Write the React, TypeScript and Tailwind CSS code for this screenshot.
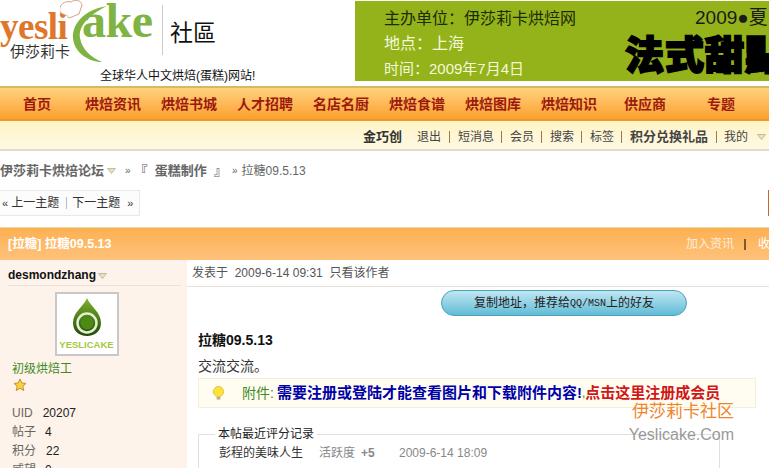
const cjk = "font-['Liberation_Sans','Noto_Sans_CJK_SC',sans-serif]";

const navItems = ["首页", "烘焙资讯", "烘焙书城", "人才招聘", "名店名厨", "烘焙食谱", "烘焙图库", "烘焙知识", "供应商", "专题"];
const links = ["短消息", "会员", "搜索", "标签"];

function Caret({ className = "" }: { className?: string }) {
  return (
    <svg width="9" height="6" viewBox="0 0 9 6" className={className}>
      <path d="M0.5 0.5 L8.5 0.5 L4.5 5.5 Z" fill="#e8dfc4" stroke="#b8b090" strokeWidth="0.8" />
    </svg>
  );
}

function Logo() {
  return (
    <div className="relative w-[162px] h-[66px] shrink-0">
      <span className="absolute left-0 top-[12px] text-[37px] leading-[30px] font-bold text-[#e0762c] font-['Liberation_Serif',serif] tracking-[-0.5px]">yesli</span>
      <span className="absolute left-[10px] top-[43px] text-[15px] leading-[18px] text-[#333]">伊莎莉卡</span>
      <svg width="60" height="66" viewBox="0 0 60 66" className="absolute left-[60px] top-0">
        <path d="M47 6 C22 10 12 26 13 38 C14 52 28 62 42 62 C32 58 22 50 20 38 C18 26 30 14 47 6 Z" fill="#7fb342" />
        <path d="M0 12 C-2 5 5 0 11 2 C15 -1 21 0 22 5 L19 14 L9 18 C8 15 3 15 0 12 Z" fill="#fff" stroke="#d9a184" strokeWidth="1" />
      </svg>
      <span className="absolute left-[82px] top-0 text-[48px] leading-[42px] font-bold text-[#7fb342] font-['Liberation_Serif',serif] tracking-[-0.5px]">ake</span>
    </div>
  );
}

function Banner() {
  return (
    <div className="relative w-[414px] h-[80px] mt-px bg-[#94b31a] overflow-hidden shrink-0">
      <div className="flex flex-col pl-[29px] pt-[5px] text-[16px] leading-[25px] whitespace-nowrap">
        <span className="text-[#1c2a05]">主办单位：伊莎莉卡烘焙网</span>
        <span className="text-[#f4f8dc]">地点：上海</span>
        <span className="text-[15px] text-[#f4f8dc]">时间：2009年7月4日</span>
      </div>
      <span className="absolute left-[340px] top-[5px] text-[19px] leading-[24px] whitespace-nowrap text-[#1a1a1a]">2009●夏</span>
      <span className="absolute left-[270px] top-[32px] text-[39px] leading-[46px] font-black whitespace-nowrap text-black [-webkit-text-stroke:2px_black] tracking-[1px]">法式甜點</span>
    </div>
  );
}

function Avatar() {
  return (
    <div className="w-[64px] h-[64px] border-2 border-[#c8c8c8] bg-white flex flex-col items-center pt-[3px]">
      <svg width="32" height="40" viewBox="0 0 32 40">
        <defs>
          <linearGradient id="drop" x1="0" y1="0" x2="0" y2="1">
            <stop offset="0" stopColor="#7fb32a" />
            <stop offset="1" stopColor="#1f4a0c" />
          </linearGradient>
        </defs>
        <path d="M16 1 C19 9 30 15 30 26 C30 34 24 39 16 39 C8 39 2 34 2 26 C2 15 13 9 16 1 Z" fill="url(#drop)" />
        <circle cx="16" cy="26" r="9.5" fill="none" stroke="#e4efd2" strokeWidth="2.5" />
        <circle cx="16" cy="26" r="6.5" fill="#4c8a14" />
      </svg>
      <span className="text-[9.5px] leading-[11px] font-bold text-[#a3c93f] mt-[2px] font-['Liberation_Sans',sans-serif]">YESLICAKE</span>
    </div>
  );
}

function Stat({ label, value, gap }: { label: string; value: string; gap: string }) {
  return (
    <div className={`flex ${gap} h-[19px] items-center text-[12px]`}>
      <span className="text-[#666]">{label}</span>
      <span className="text-[#222]">{value}</span>
    </div>
  );
}

export default function App() {
  return (
    <div className={`relative w-[769px] h-[468px] overflow-hidden bg-white ${cjk}`}>
      <header className="flex h-[86px]">
        <div className="w-[355px] shrink-0 flex flex-col">
          <div className="flex items-center h-[66px]">
            <Logo />
            <div className="w-px h-[50px] mb-[6px] bg-[#ccc]" />
            <span className="ml-[7px] text-[23px] leading-[28px] text-[#111]">社區</span>
          </div>
          <span className="pl-[100px] mt-[2px] text-[12px] leading-[16px] text-[#111] whitespace-nowrap">全球华人中文烘焙(蛋糕)网站!</span>
        </div>
        <Banner />
      </header>

      <nav className="flex h-[35px] pt-[1px] items-center border-t-2 border-t-[#d8b860] border-b-2 border-b-[#ea9a30] bg-gradient-to-b from-[#ffd27a] to-[#fb9f2c]">
        {navItems.map((n, i) => (
          <span key={n} className={`w-[76px] shrink-0 text-center text-[14px] font-bold text-[#9c1a0c] whitespace-nowrap ${i === 0 ? "-ml-[1px]" : ""}`}>{n}</span>
        ))}
      </nav>

      <div className="flex h-[30px] pt-[3px] items-center justify-end pr-[3px] border-b-2 border-b-[#e2dcc6] bg-gradient-to-b from-[#fff3c4] to-[#fff9e4] text-[12px] text-[#444] whitespace-nowrap">
        <span className="text-[13px] font-bold text-[#333] mr-[15px]">金巧创</span>
        <span className="pr-[8px]">退出</span>
        {links.map((l) => (
          <span key={l} className="flex items-center">
            <span className="w-px h-[12px] bg-[#9c7a50] mr-[8px]" />
            <span className="pr-[7px]">{l}</span>
          </span>
        ))}
        <span className="w-px h-[12px] bg-[#9c7a50] mr-[8px]" />
        <span className="text-[13px] font-bold text-[#444] pr-[8px]">积分兑换礼品</span>
        <span className="w-px h-[12px] bg-[#9c7a50] mr-[7px]" />
        <span>我的</span>
        <Caret className="ml-[9px]" />
      </div>

      <div className="flex items-center h-[39px] text-[12px] text-[#666] whitespace-nowrap">
        <span className="text-[13px] font-bold">伊莎莉卡烘焙论坛</span>
        <Caret className="ml-[3px]" />
        <span className="ml-[9px] text-[10px]">»</span>
        <span className="ml-[4px] text-[13px] font-bold">『&nbsp; 蛋糕制作&nbsp; 』</span>
        <span className="ml-[5px] text-[10px]">»</span>
        <span className="ml-[4px] text-[12px]">拉糖09.5.13</span>
      </div>

      <div className="flex justify-between h-[26px]">
        <div className="flex items-center w-[140px] border border-l-0 border-[#e8e8e8] bg-[#fcfcfc] text-[12px] text-[#333] whitespace-nowrap">
          <span className="text-[11px] ml-[2px]">«</span>
          <span className="ml-[3px]">上一主题</span>
          <span className="mx-[5px] ml-[7px] w-px h-[12px] bg-[#bbb]" />
          <span>下一主题</span>
          <span className="text-[11px] ml-[7px]">»</span>
        </div>
        <div className="w-px bg-[#c8662c]" />
      </div>

      <div className="flex items-center justify-between h-[33px] mt-[11px] pl-[8px] border-t border-t-[#e8d8a8] bg-gradient-to-b from-[#fdb050] to-[#fec27a] text-[12px] text-white whitespace-nowrap">
        <span className="text-[12.5px] font-bold">[拉糖] 拉糖09.5.13</span>
        <span className="flex items-center">
          <span className="text-[#fbeedd]">加入资讯</span>
          <span className="ml-[10px] w-[2px] h-[11px] bg-[#7a5a30]" />
          <span className="ml-[12px] w-[11px] overflow-hidden">收</span>
        </span>
      </div>

      <div className="flex h-[208px]">
        <aside className="w-[187px] shrink-0 bg-[#fdf3ea] pl-[8px] pr-[6px]">
          <div className="flex items-center h-[26px] pt-[4px] border-b border-b-[#ebe2d6] text-[12px] font-bold text-[#111]">
            desmondzhang
            <Caret className="ml-[2px] mt-[2px]" />
          </div>
          <div className="flex justify-center pr-[16px] pt-[6px]">
            <Avatar />
          </div>
          <div className="pl-[4px] mt-[3px] text-[12px] leading-[20px] text-[#3f8a1f]">初级烘焙工</div>
          <svg width="14" height="14" viewBox="0 0 14 14" className="ml-[5px] -mt-[1px]">
            <path d="M7 1 L8.8 5 L13 5.4 L9.8 8.2 L10.8 12.6 L7 10.2 L3.2 12.6 L4.2 8.2 L1 5.4 L5.2 5 Z" fill="#fbd23c" stroke="#c8902c" strokeWidth="1" />
          </svg>
          <div className="pl-[4px] mt-[11px]">
            <Stat label="UID" value="20207" gap="gap-[10px]" />
            <Stat label="帖子" value="4" gap="gap-[9px]" />
            <Stat label="积分" value="22" gap="gap-[10px]" />
            <Stat label="威望" value="0" gap="gap-[9px]" />
          </div>
        </aside>

        <main className="flex-1 min-w-0 pr-[13px]">
          <div className="flex items-center h-[27px] -mr-[13px] border-b border-b-[#e6e2da] text-[12px] text-[#555] whitespace-nowrap pl-[5px]">
            发表于&nbsp; 2009-6-14 09:31&nbsp; 只看该作者
          </div>
          <div className="flex justify-end pr-[69px] pt-[3px]">
            <div className="w-[246px] h-[26px] flex items-center justify-center rounded-full border border-[#4da0b8] bg-gradient-to-b from-[#bfe6f2] to-[#5fbcd6] text-[12px] text-[#222]">
              复制地址，推荐给<span className="font-['Liberation_Mono',monospace] text-[10px]">QQ/MSN</span>上的好友
            </div>
          </div>
          <div className="pl-[11px] mt-[15px] text-[14px] leading-[18px] font-bold text-[#111]">拉糖09.5.13</div>
          <div className="pl-[11px] mt-[8px] text-[14px] leading-[18px] text-[#333]">交流交流。</div>
          <div className="flex items-center h-[30px] ml-[11px] mt-[3px] border border-[#f3efd8] bg-[#fffdf2] whitespace-nowrap overflow-hidden">
            <svg width="13" height="15" viewBox="0 0 14 16" className="ml-[13px] shrink-0">
              <circle cx="7" cy="6" r="5.5" fill="#fbe23c" stroke="#e8c030" />
              <rect x="5" y="11.5" width="4" height="3" fill="#b8b080" />
            </svg>
            <span className="ml-[17px] text-[14px] text-[#3f8a1f]">附件:</span>
            <span className="ml-[3px] text-[15px] font-bold text-[#0000a8]">需要注册或登陆才能查看图片和下载附件内容!</span>
            <span className="text-[12px] text-[#3f8a1f]">,</span>
            <span className="text-[15px] font-bold text-[#d01818]">点击这里注册成会员</span>
          </div>
          <fieldset className="ml-[11px] mt-[20px] mr-[36px] h-[60px] border border-[#e0e0e0] pl-[20px]">
            <legend className="px-[3px] -ml-[4px] text-[12px] leading-[13px] text-[#222]">本帖最近评分记录</legend>
            <div className="flex items-center h-[18px] mt-[3px] text-[12px] whitespace-nowrap">
              <span className="w-[100px] text-[#333]">彭程的美味人生</span>
              <span className="w-[42px] text-[#888]">活跃度</span>
              <span className="w-[38px] font-bold text-[#888]">+5</span>
              <span className="text-[#888]">2009-6-14 18:09</span>
            </div>
          </fieldset>
        </main>
      </div>

      <div className="absolute left-[625px] top-[402px] flex flex-col items-end w-[109px]">
        <span className="text-[17px] leading-[20px] text-[#f0842c]">伊莎莉卡社区</span>
        <span className="mt-[3px] text-[16px] leading-[20px] text-[#999] whitespace-nowrap">Yeslicake.Com</span>
      </div>
    </div>
  );
}
